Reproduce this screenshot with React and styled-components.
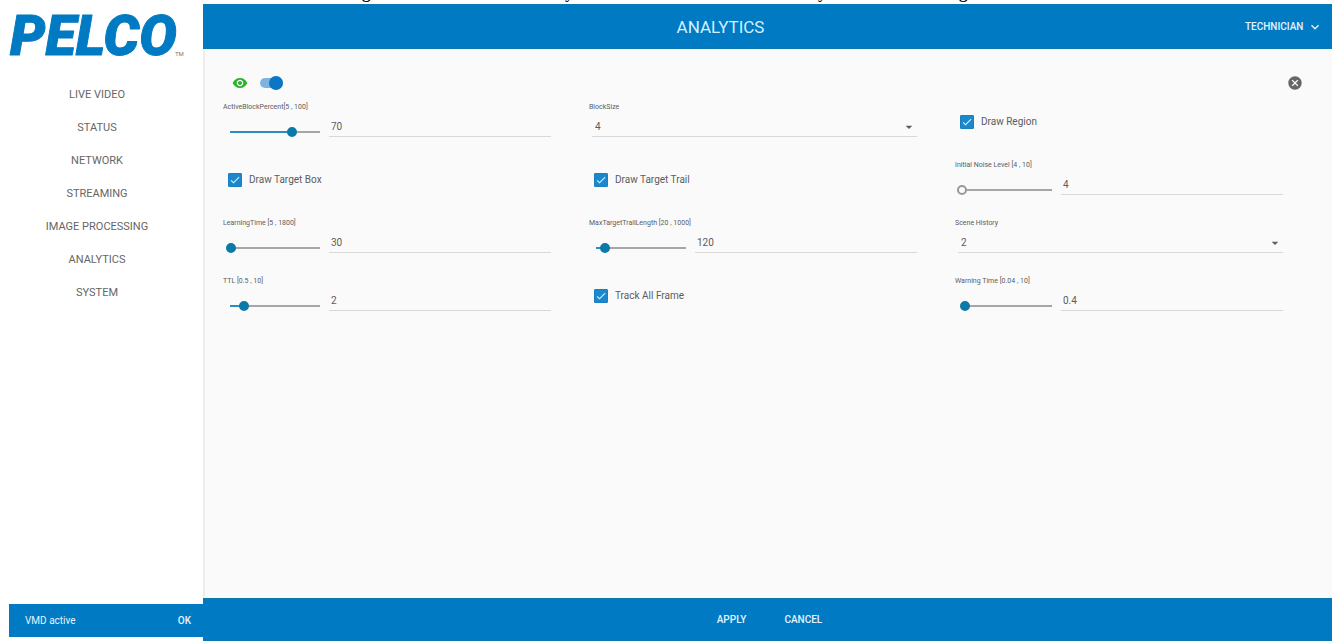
import React, { useState } from "react";
import styled, { createGlobalStyle, css } from "styled-components";
import {
  MdArrowDropDown,
  MdCancel,
  MdCheck,
  MdKeyboardArrowDown,
  MdVisibility
} from "react-icons/md";

const BLUE = "#007ac3";
const TEAL = "#0b7aa8";

const menu = [
  "LIVE VIDEO",
  "STATUS",
  "NETWORK",
  "STREAMING",
  "IMAGE PROCESSING",
  "ANALYTICS",
  "SYSTEM"
];

const fields = [
  { kind: "slider", id: "activeBlock", label: "ActiveBlockPercent[5 , 100]", min: 5, max: 100, step: 1, value: 70 },
  { kind: "select", id: "blockSize", label: "BlockSize", options: ["2", "4", "8"], value: "4" },
  { kind: "check", id: "drawRegion", label: "Draw Region", value: true },
  { kind: "check", id: "drawTargetBox", label: "Draw Target Box", value: true },
  { kind: "check", id: "drawTargetTrail", label: "Draw Target Trail", value: true },
  { kind: "slider", id: "noiseLevel", label: "Initial Noise Level [4 , 10]", min: 4, max: 10, step: 1, value: 4 },
  { kind: "slider", id: "learningTime", label: "LearningTime [5 , 1800]", min: 5, max: 1800, step: 1, value: 30 },
  { kind: "slider", id: "trailLength", label: "MaxTargetTrailLength [20 , 1000]", min: 20, max: 1000, step: 1, value: 120 },
  { kind: "select", id: "sceneHistory", label: "Scene History", options: ["1", "2", "3"], value: "2" },
  { kind: "slider", id: "ttl", label: "TTL [0.5 , 10]", min: 0.5, max: 10, step: 0.1, value: 2 },
  { kind: "check", id: "trackAllFrame", label: "Track All Frame", value: true },
  { kind: "slider", id: "warningTime", label: "Warning Time [0.04 , 10]", min: 0.04, max: 10, step: 0.01, value: 0.4 }
];

const SliderField = ({ field }) => {
  const [value, setValue] = useState(field.value);
  const percent = ((value - field.min) / (field.max - field.min)) * 100;
  return (
    <Cell>
      <FieldLabel htmlFor={field.id}>{field.label}</FieldLabel>
      <SliderRow>
        <Slider
          id={field.id}
          type="range"
          min={field.min}
          max={field.max}
          step="any"
          value={value}
          $empty={percent <= 0}
          style={{ "--fill": `${percent}%` }}
          onChange={e => {
            const next = Math.round(Number(e.target.value) / field.step) * field.step;
            setValue(Number(next.toFixed(2)));
          }}
        />
        <ValueInput
          type="text"
          aria-label={field.label}
          value={value}
          onChange={e => setValue(e.target.value)}
        />
      </SliderRow>
    </Cell>
  );
};

const SelectField = ({ field }) => {
  const [value, setValue] = useState(field.value);
  return (
    <Cell>
      <FieldLabel htmlFor={field.id}>{field.label}</FieldLabel>
      <SelectRow>
        <Select id={field.id} value={value} onChange={e => setValue(e.target.value)}>
          {field.options.map(o => (
            <option key={o} value={o}>
              {o}
            </option>
          ))}
        </Select>
        <MdArrowDropDown />
      </SelectRow>
    </Cell>
  );
};

const CheckField = ({ field }) => {
  const [checked, setChecked] = useState(field.value);
  return (
    <Cell>
      <CheckLabel>
        <CheckMark>
          <CheckInput
            type="checkbox"
            checked={checked}
            onChange={() => setChecked(!checked)}
          />
          {checked && <MdCheck />}
        </CheckMark>
        {field.label}
      </CheckLabel>
    </Cell>
  );
};

const App = () => {
  const [enabled, setEnabled] = useState(true);
  return (
    <>
      <GlobalStyle />
      <Page>
        {/* tail of the paragraph above the panel, only the descenders show */}
        <CutLine aria-hidden="true">
          <span />
          <span>g</span>
          <span>y,</span>
          <span>y</span>
          <span>g</span>
        </CutLine>
        <Shell>
          <Sidebar>
            <Logo viewBox="0 0 203 50" role="img" aria-label="Pelco">
              <LogoText x="10" y="48">
                PELCO
              </LogoText>
              <LogoMark x="175" y="49">
                TM
              </LogoMark>
            </Logo>
            <Nav>
              {menu.map(m => (
                <NavLink key={m} href="#">
                  {m}
                </NavLink>
              ))}
            </Nav>
            <Status>
              <span>VMD active</span>
              <BarButton>OK</BarButton>
            </Status>
          </Sidebar>
          <Content>
            <Header>
              <Title>ANALYTICS</Title>
              <UserButton>
                TECHNICIAN
                <MdKeyboardArrowDown />
              </UserButton>
            </Header>
            <Main>
              <Tools>
                <EyeButton aria-label="Preview">
                  <MdVisibility />
                </EyeButton>
                <Toggle
                  type="checkbox"
                  role="switch"
                  aria-label="Enabled"
                  checked={enabled}
                  onChange={() => setEnabled(!enabled)}
                />
                <CloseButton aria-label="Close">
                  <MdCancel />
                </CloseButton>
              </Tools>
              <Grid>
                {fields.map(f => {
                  if (f.kind === "slider") {
                    return <SliderField key={f.id} field={f} />;
                  } else if (f.kind === "select") {
                    return <SelectField key={f.id} field={f} />;
                  }
                  return <CheckField key={f.id} field={f} />;
                })}
              </Grid>
            </Main>
            <Footer>
              <BarButton>APPLY</BarButton>
              <BarButton>CANCEL</BarButton>
            </Footer>
          </Content>
        </Shell>
      </Page>
    </>
  );
};

const GlobalStyle = createGlobalStyle`
  * {
    box-sizing: border-box;
  }
  body {
    margin: 0;
    background-color: #ffffff;
    color: #5c5c5c;
    font-family: Roboto, "Liberation Sans", sans-serif;
    font-size: 10px;
  }
  button, input, select {
    font-family: inherit;
    color: inherit;
  }
`;

const plainButton = css`
  border: none;
  padding: 0;
  background-color: transparent;
  cursor: pointer;
`;

const Page = styled.div`
  min-height: 100vh;
  display: flex;
  flex-direction: column;
  padding: 0 2px 1px 0;
`;

const CutLine = styled.div`
  height: 20px;
  margin-top: -16px;
  display: grid;
  grid-template-columns: 362fr 203fr 253fr 141fr 373fr;
  color: #111111;
  font-family: "Liberation Serif", serif;
  font-size: 17px;
  font-weight: bold;
  line-height: 18px;
`;

const Shell = styled.div`
  flex: 1;
  display: flex;
`;

const Sidebar = styled.aside`
  width: 203px;
  flex-shrink: 0;
  display: flex;
  flex-direction: column;
  padding-bottom: 4px;
  background-color: #ffffff;
`;

const Logo = styled.svg`
  width: 100%;
  margin-top: 3px;
`;

const LogoText = styled.text`
  font-size: 56px;
  font-weight: 900;
  font-style: italic;
  fill: ${BLUE};
  stroke: ${BLUE};
  stroke-width: 1px;
  stroke-linejoin: round;
`;

const LogoMark = styled.text`
  font-size: 6px;
  fill: #777777;
`;

const Nav = styled.nav`
  flex: 1;
  display: flex;
  flex-direction: column;
  margin: 21px 9px 0 0;
`;

const NavLink = styled.a`
  font-size: 11px;
  line-height: 33px;
  text-align: center;
  text-decoration: none;
  color: #666666;
`;

const Status = styled.div`
  height: 33px;
  margin-left: 9px;
  padding: 0 12px 0 16px;
  display: flex;
  align-items: center;
  justify-content: space-between;
  background-color: ${BLUE};
  color: #e4f4ff;
`;

const BarButton = styled.button`
  ${plainButton}
  color: #e4f4ff;
  font-size: 10px;
  font-weight: 500;
`;

const Content = styled.div`
  flex: 1;
  display: flex;
  flex-direction: column;
  background-color: #fafafa;
`;

const Header = styled.header`
  height: 45px;
  display: flex;
  align-items: center;
  background-color: ${BLUE};
  border: 1px solid #0a7aae;
  color: #d4f0ff;
`;

const Title = styled.h1`
  flex: 1;
  margin: 0;
  font-size: 17px;
  font-weight: 400;
  text-align: center;
`;

const UserButton = styled.button`
  ${plainButton}
  width: 94px;
  padding-left: 8px;
  display: flex;
  align-items: center;
  gap: 4px;
  color: #e4f4ff;
  font-size: 10px;
  font-weight: 500;
  svg {
    width: 16px;
    height: 16px;
  }
`;

const Main = styled.main`
  flex: 1;
  padding: 26px 11px 0 18px;
  border-left: 2px solid #ededed;
`;

const Tools = styled.div`
  height: 16px;
  padding: 0 18px 0 9px;
  display: flex;
  align-items: center;
  gap: 12px;
`;

const EyeButton = styled.button`
  ${plainButton}
  display: flex;
  color: #2bb32b;
  svg {
    width: 16px;
    height: 16px;
  }
`;

const Toggle = styled.input`
  appearance: none;
  width: 23px;
  height: 10px;
  margin: 0;
  display: flex;
  align-items: center;
  cursor: pointer;
  background-color: #7db4e0;
  border-radius: 5px;
  &::before {
    content: "";
    width: 14px;
    height: 14px;
    flex-shrink: 0;
    border-radius: 50%;
    background-color: #999999;
  }
  &:checked::before {
    margin-left: auto;
    background-color: #0b76c4;
  }
`;

const CloseButton = styled.button`
  ${plainButton}
  margin-left: auto;
  display: flex;
  color: #666666;
  svg {
    width: 16px;
    height: 16px;
  }
`;

const Grid = styled.div`
  display: grid;
  grid-template-columns: repeat(3, 1fr);
  grid-auto-rows: 58px;
  margin-top: 9px;
`;

const Cell = styled.div`
  padding-right: 38px;
`;

const FieldLabel = styled.label`
  display: block;
  margin-bottom: 3px;
  font-size: 7px;
  line-height: 14px;
`;

const SliderRow = styled.div`
  margin-left: 2px;
  display: flex;
  align-items: flex-end;
  gap: 4px;
`;

const Slider = styled.input`
  appearance: none;
  width: 100px;
  height: 10px;
  margin: 0;
  flex-shrink: 0;
  cursor: pointer;
  background: linear-gradient(
      to right,
      #2a8fc0 var(--fill),
      #a6a6a6 var(--fill)
    )
    center / calc(100% - 10px) 2px no-repeat;
  &::-webkit-slider-thumb {
    appearance: none;
    width: 10px;
    height: 10px;
    border-radius: 50%;
    border: 2px solid ${props => (props.$empty ? "#999999" : TEAL)};
    background-color: ${props => (props.$empty ? "#fafafa" : TEAL)};
  }
`;

const ValueInput = styled.input`
  flex: 1;
  min-width: 0;
  height: 20px;
  padding: 0 2px;
  border: none;
  border-bottom: 1px solid #d8d8d8;
  background-color: transparent;
  font-size: 10px;
  &:focus {
    outline: none;
  }
`;

const SelectRow = styled.div`
  margin-left: 3px;
  display: grid;
  align-items: center;
  border-bottom: 1px solid #d8d8d8;
  > * {
    grid-area: 1 / 1;
  }
  svg {
    justify-self: end;
    width: 16px;
    height: 16px;
    pointer-events: none;
  }
`;

const Select = styled.select`
  appearance: none;
  width: 100%;
  height: 19px;
  padding: 0 3px;
  border: none;
  background-color: transparent;
  font-size: 10px;
`;

const CheckLabel = styled.label`
  margin: 15px 0 0 5px;
  display: flex;
  align-items: center;
  gap: 7px;
  line-height: 14px;
  cursor: pointer;
`;

const CheckMark = styled.span`
  display: grid;
  place-items: center;
  > * {
    grid-area: 1 / 1;
  }
  svg {
    width: 12px;
    height: 12px;
    color: #d4f0ff;
    pointer-events: none;
  }
`;

const CheckInput = styled.input`
  appearance: none;
  width: 14px;
  height: 14px;
  margin: 0;
  border: 1px solid #1a7fc0;
  border-radius: 1px;
  cursor: pointer;
  &:checked {
    background-color: #1c88cc;
  }
`;

const Footer = styled.footer`
  height: 43px;
  padding-left: 4px;
  display: flex;
  align-items: center;
  justify-content: center;
  gap: 38px;
  background-color: ${BLUE};
  border: 1px solid #0a7aae;
`;

export default App;
